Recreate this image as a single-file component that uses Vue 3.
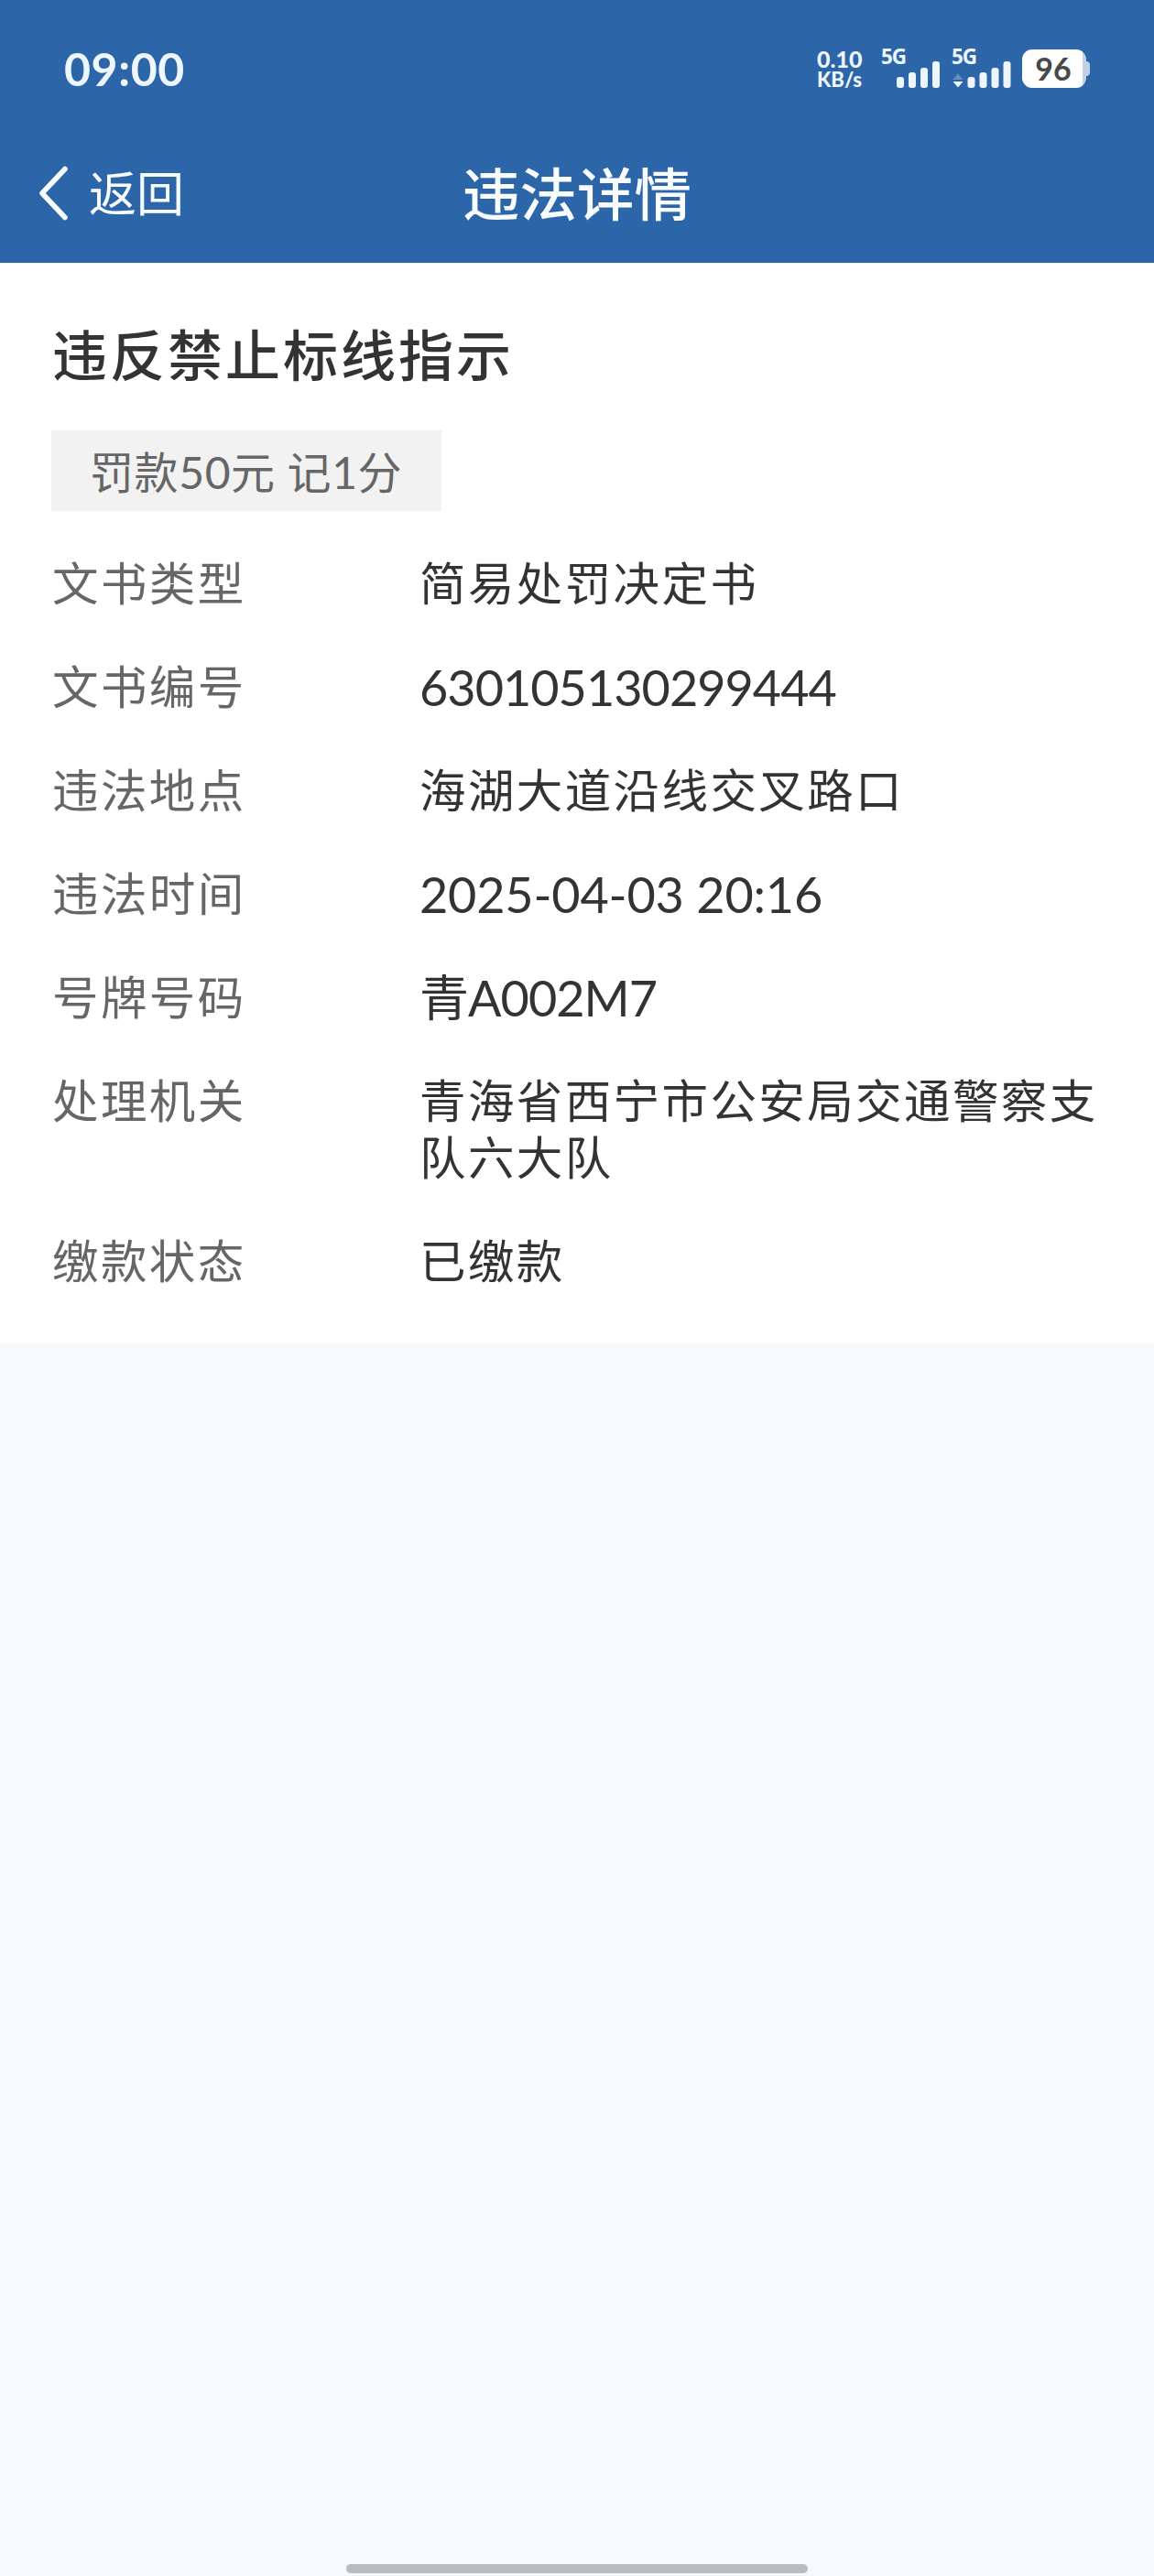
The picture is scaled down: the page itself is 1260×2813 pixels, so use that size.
<template>
  <div class="page">
    <header class="header">
      <div class="status-bar">
        <span class="clock">09:00</span>
        <div class="status-icons">
          <div class="speed">
            <span class="speed-value">0.10</span>
            <span class="speed-unit">KB/s</span>
          </div>
          <svg class="signal" viewBox="0 0 64 44">
            <text class="network" x="-1" y="17" textLength="28">5G</text>
            <rect
              v-for="bar in bars"
              :key="bar.x"
              :x="bar.x"
              :y="43 - bar.height"
              width="8"
              :height="bar.height"
              rx="3"
            />
          </svg>
          <svg class="signal second" viewBox="0 0 64 44">
            <text class="network" x="-1" y="17" textLength="28">5G</text>
            <path class="upload" d="M6 27.5 11.5 34H.5Z" />
            <path d="M.5 36h11L6 42.5Z" />
            <rect
              v-for="bar in bars"
              :key="bar.x"
              :x="bar.x + 0.5"
              :y="43 - bar.height"
              width="8"
              :height="bar.height"
              rx="3"
            />
          </svg>
          <div class="battery">
            <div class="battery-level">96</div>
          </div>
        </div>
      </div>
      <nav class="nav-bar">
        <button class="back" type="button">
          <svg class="chevron" viewBox="0 0 33 60">
            <path d="M29 3.5 4 30 29 56.5" />
          </svg>
          <span>返回</span>
        </button>
        <h1 class="nav-title">违法详情</h1>
      </nav>
    </header>

    <main class="detail">
      <h2 class="title">违反禁止标线指示</h2>
      <div class="tag">罚款50元 记1分</div>
      <dl class="list">
        <div v-for="item in items" :key="item.label" class="row">
          <dt class="label">{{ item.label }}</dt>
          <dd class="value" :class="item.type">{{ item.value }}</dd>
        </div>
      </dl>
    </main>

    <footer class="home">
      <div class="home-indicator"></div>
    </footer>
  </div>
</template>

<script setup>
const bars = [
  { x: 16, height: 12 },
  { x: 29, height: 17 },
  { x: 42, height: 22 },
  { x: 55, height: 29 },
];

const items = [
  { label: "文书类型", value: "简易处罚决定书" },
  { label: "文书编号", value: "630105130299444", type: "number" },
  { label: "违法地点", value: "海湖大道沿线交叉路口" },
  { label: "违法时间", value: "2025-04-03 20:16", type: "time" },
  { label: "号牌号码", value: "青A002M7", type: "plate" },
  { label: "处理机关", value: "青海省西宁市公安局交通警察支队六大队" },
  { label: "缴款状态", value: "已缴款" },
];
</script>

<style>
body {
  margin: 0;
}
</style>

<style scoped>
.page {
  display: flex;
  flex-direction: column;
  width: 1260px;
  height: 2813px;
  background: #f5f9fa;
  font-family: Lato, "Noto Sans CJK SC", sans-serif;
  color: #333;
}

.header {
  height: 287px;
  background: #2c65a8;
  color: #f8fcff;
}

.status-bar {
  display: flex;
  align-items: center;
  justify-content: space-between;
  height: 150px;
  padding: 0 70px;
  box-sizing: border-box;
}

.clock {
  font-size: 50px;
  font-weight: 700;
  line-height: 60px;
  letter-spacing: 0.6px;
  color: #edf5fd;
}

.status-icons {
  display: flex;
  align-items: center;
  font-family: "Noto Sans", sans-serif;
}

.speed {
  display: flex;
  flex-direction: column;
  width: 70px;
  margin-right: 1px;
  font-weight: 700;
  color: #edf5fd;
}

.speed-value {
  font-family: Lato, sans-serif;
  font-size: 25px;
  font-weight: 900;
  line-height: 23px;
}

.speed-unit {
  font-family: Lato, sans-serif;
  font-size: 22px;
  font-weight: 900;
  line-height: 22px;
}

.signal {
  width: 64px;
  height: 44px;
  margin-right: 13px;
  overflow: visible;
  fill: #edf5fd;
}

.second {
  margin-right: 12px;
}

.network {
  font-size: 22.5px;
  font-weight: 700;
}

.upload {
  opacity: 0.3;
}

.battery {
  display: flex;
  align-items: center;
  width: 74px;
}

.battery::after {
  content: "";
  width: 4px;
  height: 16px;
  border-radius: 0 4px 4px 0;
  background: #c0d1e7;
}

.battery-level {
  width: 70px;
  height: 42px;
  padding-right: 2px;
  box-sizing: border-box;
  border-radius: 11px;
  background: linear-gradient(to right, #fff 66px, #c0d1e7 66px);
  font-family: Lato, sans-serif;
  font-size: 34px;
  font-weight: 700;
  line-height: 42px;
  text-align: center;
  color: #484848;
}

.nav-bar {
  display: grid;
  grid-template-columns: 1fr auto 1fr;
  align-items: center;
  height: 124px;
}

.back {
  display: flex;
  align-items: center;
  gap: 22px;
  padding: 0 0 2px 42px;
  border: 0;
  background: none;
  font: inherit;
  font-size: 52px;
  line-height: 62px;
  color: inherit;
}

.chevron {
  width: 33px;
  height: 60px;
  fill: none;
  stroke: currentColor;
  stroke-width: 5.5;
  stroke-linecap: round;
  stroke-linejoin: round;
}

.nav-title {
  margin: 0;
  font-size: 62.5px;
  font-weight: 500;
  line-height: 74px;
}

.detail {
  height: 1180px;
  padding: 63px 56px 0;
  box-sizing: border-box;
  background: #fff;
}

.title {
  margin: 0;
  padding-left: 1px;
  font-size: 60px;
  font-weight: 500;
  line-height: 76px;
  letter-spacing: 3px;
}

.tag {
  width: 426px;
  height: 88px;
  margin: 44px 0 48px;
  padding-left: 42px;
  box-sizing: border-box;
  background: #f2f2f2;
  font-size: 48px;
  line-height: 92px;
  letter-spacing: 0.6px;
  white-space: nowrap;
  color: #666;
}

.list {
  display: flex;
  flex-direction: column;
  gap: 51px;
  margin: 0;
}

.row {
  display: grid;
  grid-template-columns: 401px 746px;
  padding-left: 1px;
  font-size: 50.5px;
  line-height: 62px;
  letter-spacing: 2.4px;
}

.label {
  color: #666;
}

.value {
  margin: 0;
}

.number,
.time,
.plate {
  height: 62px;
  font-size: 54px;
  line-height: 64px;
  letter-spacing: -1px;
}

.time {
  letter-spacing: -0.2px;
}

.home {
  display: flex;
  justify-content: center;
  margin-top: auto;
  padding-bottom: 3px;
}

.home-indicator {
  width: 504px;
  height: 10px;
  border-radius: 5px;
  background: #b8bdbe;
}
</style>
